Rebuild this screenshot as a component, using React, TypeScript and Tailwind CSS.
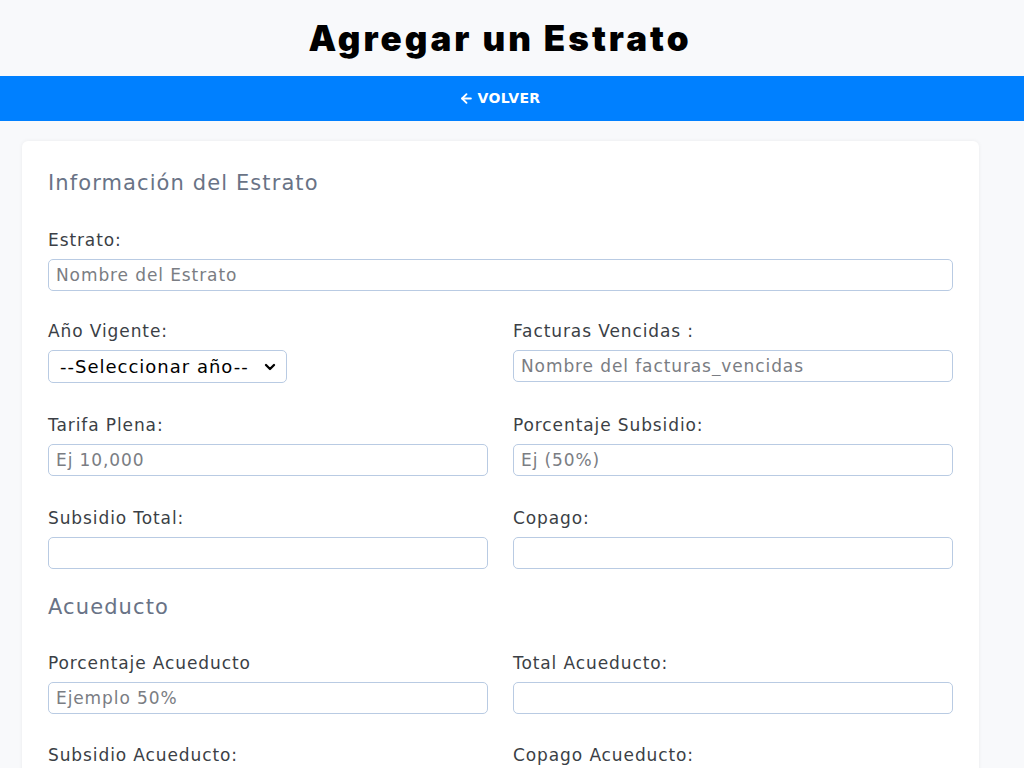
import { ArrowLeft, ChevronDown } from "lucide-react";

const FONT = { fontFamily: "'DejaVu Sans', 'Noto Sans', sans-serif" };

function Field({ label, placeholder }: { label: string; placeholder?: string }) {
  return (
    <div className="flex flex-col">
      <label className="text-[17px] leading-5 tracking-[0.9px] text-[#3b3f46] mb-[9px]">{label}</label>
      <input
        placeholder={placeholder}
        className="h-8 w-full rounded-[5px] border border-[#b9cbe3] bg-white px-[7px] text-[17px] tracking-[0.9px] text-[#333] placeholder:text-[#7a7d83] outline-none"
      />
    </div>
  );
}

export default function App() {
  return (
    <div className="min-h-screen bg-[#f8f9fb]" style={FONT}>
      {/* Title */}
      <div className="w-[1000px] h-[76px] flex items-center justify-center">
        <h1 className="text-[35px] font-black text-black tracking-[3px] font-[Inter]">Agregar un Estrato</h1>
      </div>

      {/* Back bar */}
      <div className="h-[45px] bg-[#0080ff]">
        <div className="w-[1000px] h-full flex items-center justify-center">
          <button className="flex items-center gap-[3px] text-white text-[14px] tracking-[0.4px] font-bold">
            <ArrowLeft size={15} strokeWidth={3} />
            VOLVER
          </button>
        </div>
      </div>

      {/* Card */}
      <div className="pt-5 pl-[22px]">
        <div className="w-[957px] rounded-[6px] bg-white shadow-[0_0_4px_rgba(0,0,0,0.06)] px-[26px] pt-[28px] pb-10">
          <h2 className="text-[21px] leading-7 tracking-[1.1px] text-[#697386] mb-[33px]">Información del Estrato</h2>

          <div className="mb-[30px]">
            <Field label="Estrato:" placeholder="Nombre del Estrato" />
          </div>

          <div className="grid grid-cols-2 gap-x-[25px] gap-y-[32px]">
            <div className="flex flex-col">
              <label className="text-[17px] leading-5 tracking-[0.9px] text-[#3b3f46] mb-[9px]">Año Vigente:</label>
              <div className="relative w-[239px]">
                <select className="appearance-none h-[33px] w-full rounded-[5px] border border-[#b9cbe3] bg-white pl-[11px] text-[18px] tracking-[1px] text-black outline-none">
                  <option>--Seleccionar año--</option>
                </select>
                <ChevronDown size={16} strokeWidth={3.5} className="absolute right-[9px] top-[9px] text-black pointer-events-none" />
              </div>
            </div>
            <Field label="Facturas Vencidas :" placeholder="Nombre del facturas_vencidas" />
            <Field label="Tarifa Plena:" placeholder="Ej 10,000" />
            <Field label="Porcentaje Subsidio:" placeholder="Ej (50%)" />
            <Field label="Subsidio Total:" />
            <Field label="Copago:" />
          </div>

          <h2 className="text-[21px] leading-7 tracking-[1.1px] text-[#697386] mt-[24px] mb-[32px]">Acueducto</h2>

          <div className="grid grid-cols-2 gap-x-[25px] gap-y-[31px]">
            <Field label="Porcentaje Acueducto" placeholder="Ejemplo 50%" />
            <Field label="Total Acueducto:" />
            <Field label="Subsidio Acueducto:" />
            <Field label="Copago Acueducto:" />
          </div>
        </div>
      </div>
    </div>
  );
}
